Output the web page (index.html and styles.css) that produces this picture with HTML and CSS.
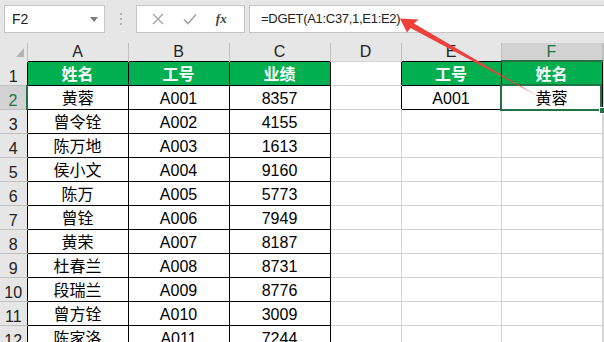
FILE: index.html
```html
<html>
<head>
  <title>DGET</title>
  <link rel="stylesheet" href="styles.css">
</head>
<body>
  <div class="toolbar">
    <div class="namebox"><span>F2</span><span class="caret"></span></div>
    <div class="grip"><i></i><i></i><i></i></div>
    <div class="fxbtns">
      <svg width="12" height="12" viewBox="0 0 12 12"><path d="M1 1 L11 11 M11 1 L1 11" stroke="#a6a6a6" stroke-width="1.4" fill="none"/></svg>
      <svg width="14" height="12" viewBox="0 0 14 12"><path d="M1 6.5 L5 10.5 L13 1.5" stroke="#a6a6a6" stroke-width="1.6" fill="none"/></svg>
      <span class="fx">fx</span>
    </div>
    <div class="formula">=DGET(A1:C37,1,E1:E2)</div>
  </div>

  <table class="grid">
    <colgroup>
      <col class="c-rh"><col class="c-w"><col class="c-w"><col class="c-w"><col class="c-d"><col class="c-e"><col class="c-f"><col>
    </colgroup>
    <tr class="hdr">
      <th class="corner"><span class="tri"></span></th>
      <th>A</th><th>B</th><th>C</th><th>D</th><th>E</th><th class="sel">F</th><th></th>
    </tr>
    <tr>
      <th class="rh">1</th>
      <td class="b g">姓名</td><td class="b g">工号</td><td class="b g">业绩</td>
      <td class="rb"></td>
      <td class="b g">工号</td><td class="b g">姓名</td><td></td>
    </tr>
    <tr>
      <th class="rh sel">2</th>
      <td class="b">黄蓉</td><td class="b">A001</td><td class="b">8357</td>
      <td class="rb"></td>
      <td class="b">A001</td><td class="b cur">黄蓉<span class="selbox"></span><span class="handle"></span></td><td></td>
    </tr>
    <tr><th class="rh">3</th><td class="b">曾令铨</td><td class="b">A002</td><td class="b">4155</td><td></td><td></td><td></td><td></td></tr>
    <tr><th class="rh">4</th><td class="b">陈万地</td><td class="b">A003</td><td class="b">1613</td><td></td><td></td><td></td><td></td></tr>
    <tr><th class="rh">5</th><td class="b">侯小文</td><td class="b">A004</td><td class="b">9160</td><td></td><td></td><td></td><td></td></tr>
    <tr><th class="rh">6</th><td class="b">陈万</td><td class="b">A005</td><td class="b">5773</td><td></td><td></td><td></td><td></td></tr>
    <tr><th class="rh">7</th><td class="b">曾铨</td><td class="b">A006</td><td class="b">7949</td><td></td><td></td><td></td><td></td></tr>
    <tr><th class="rh">8</th><td class="b">黄荣</td><td class="b">A007</td><td class="b">8187</td><td></td><td></td><td></td><td></td></tr>
    <tr><th class="rh">9</th><td class="b">杜春兰</td><td class="b">A008</td><td class="b">8731</td><td></td><td></td><td></td><td></td></tr>
    <tr><th class="rh">10</th><td class="b">段瑞兰</td><td class="b">A009</td><td class="b">8776</td><td></td><td></td><td></td><td></td></tr>
    <tr><th class="rh">11</th><td class="b">曾方铨</td><td class="b">A010</td><td class="b">3009</td><td></td><td></td><td></td><td></td></tr>
    <tr><th class="rh">12</th><td class="b">陈家洛</td><td class="b">A011</td><td class="b">7244</td><td></td><td></td><td></td><td></td></tr>
  </table>

  <!-- red arrow drawn on top of the sheet -->
  <svg class="arrow" width="604" height="342" viewBox="0 0 604 342">
    <polygon points="400,18.5 418.5,19.5 414,23.6 536,95 410.6,28 407,32.5" fill="#f0403c"/>
  </svg>
</body>
</html>
```

FILE: styles.css
```css
body {
  margin: 0;
  width: 604px;
  height: 342px;
  overflow: hidden;
  position: relative;
  background-color: #fff;
  font-family: "Liberation Sans", "Noto Sans CJK SC", sans-serif;
  font-size: 14px;
  color: #000;
}

.toolbar {
  display: flex;
  align-items: flex-start;
  height: 43px;
  box-sizing: border-box;
  padding-top: 5px;
  background-color: #e6e6e6;
}

.namebox {
  margin-left: 4px;
  width: 101px;
  height: 28px;
  box-sizing: border-box;
  background-color: #fff;
  border: 1px solid #c6c6c6;
  display: flex;
  align-items: center;
  justify-content: space-between;
  padding: 0 6px 0 7px;
  color: #222;
}

.caret {
  width: 0;
  height: 0;
  border-left: 4px solid transparent;
  border-right: 4px solid transparent;
  border-top: 5px solid #7a7a7a;
}

.grip {
  width: 31px;
  height: 28px;
  display: flex;
  flex-direction: column;
  align-items: center;
  justify-content: center;
  gap: 3px;
}

.grip i {
  width: 2px;
  height: 2px;
  background-color: #b3b3b3;
}

.fxbtns {
  width: 109px;
  height: 28px;
  box-sizing: border-box;
  background-color: #fff;
  border: 1px solid #c6c6c6;
  display: flex;
  align-items: center;
  justify-content: space-around;
  padding: 0 8px 0 6px;
}

.fx {
  font-family: "Liberation Serif", serif;
  font-style: italic;
  font-weight: bold;
  font-size: 13px;
  color: #444;
}

.formula {
  flex: 1;
  margin-left: 4px;
  margin-right: -2px;
  height: 28px;
  box-sizing: border-box;
  background-color: #fff;
  border: 1px solid #c6c6c6;
  padding-left: 11px;
  line-height: 26px;
  font-size: 13px;
  letter-spacing: -0.3px;
  color: #222;
}

.grid {
  border-collapse: collapse;
  table-layout: fixed;
  width: 604px;
}

.c-rh { width: 27px; }
.c-w { width: 101px; }
.c-d { width: 71px; }
.c-e { width: 100px; }
.c-f { width: 101px; }

.grid th,
.grid td {
  padding: 0;
  text-align: center;
  white-space: nowrap;
}

.grid td {
  height: 24px;
  box-sizing: border-box;
  border: 1px solid #d4d4d4;
  vertical-align: bottom;
  line-height: 19px;
  padding-bottom: 1px;
}

.hdr th {
  height: 18px;
  background-color: #e6e6e6;
  border-right: 1px solid #c0c0c0;
  border-bottom: none;
  font-weight: normal;
  color: #222;
  line-height: 17px;
  vertical-align: middle;
}

.hdr th.corner {
  text-align: right;
  vertical-align: bottom;
  line-height: 0;
}

.tri {
  display: inline-block;
  width: 0;
  height: 0;
  border-left: 8px solid transparent;
  border-bottom: 9px solid #b4b4b4;
  margin: 0 3px 4px 0;
}

.hdr th.sel {
  background-color: #d2d2d2;
  color: #217346;
  border-bottom: 2px solid #217346;
}

th.rh {
  background-color: #e6e6e6;
  border-bottom: 1px solid #c0c0c0;
  border-right-style: none;
  font-weight: normal;
  color: #222;
  vertical-align: bottom;
  line-height: 16px;
}

th.rh.sel {
  background-color: #d2d2d2;
  color: #217346;
  border-right: 2px solid #217346;
}

.grid td.b {
  border-color: #000;
}

.grid td.rb {
  border-right-color: #000;
}

.grid td.g {
  background-color: #00b050;
  color: #fff;
  font-weight: bold;
}

.grid td.cur {
  position: relative;
}

.selbox {
  position: absolute;
  top: -2px;
  left: -2px;
  right: 0;
  bottom: -2px;
  border: 2px solid #217346;
}

.handle {
  position: absolute;
  right: -4px;
  bottom: -5px;
  width: 5px;
  height: 5px;
  background-color: #217346;
  border: 1px solid #fff;
}

.arrow {
  position: absolute;
  top: 0;
  left: 0;
  pointer-events: none;
}
```
